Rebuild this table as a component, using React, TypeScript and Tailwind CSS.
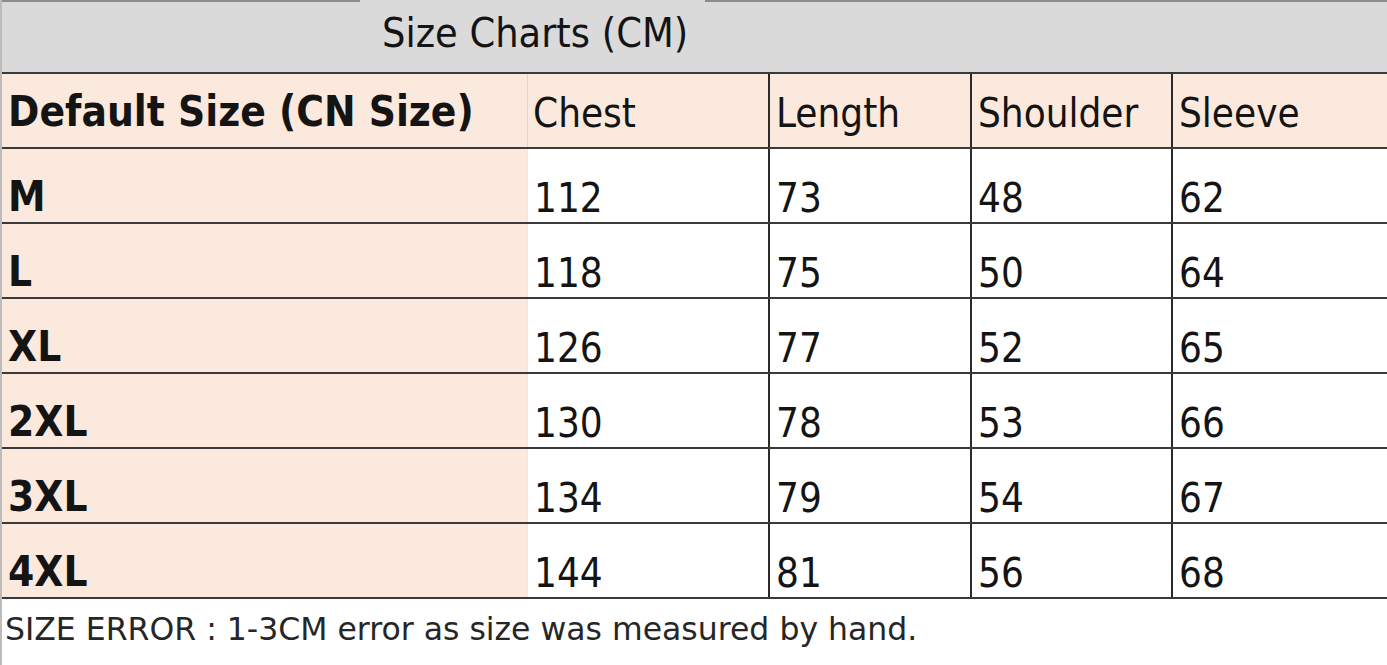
import React from "react";

const rows = [
  { size: "M", chest: "112", length: "73", shoulder: "48", sleeve: "62" },
  { size: "L", chest: "118", length: "75", shoulder: "50", sleeve: "64" },
  { size: "XL", chest: "126", length: "77", shoulder: "52", sleeve: "65" },
  { size: "2XL", chest: "130", length: "78", shoulder: "53", sleeve: "66" },
  { size: "3XL", chest: "134", length: "79", shoulder: "54", sleeve: "67" },
  { size: "4XL", chest: "144", length: "81", shoulder: "56", sleeve: "68" },
];

const font = { fontFamily: '"DejaVu Sans Condensed", "DejaVu Sans", sans-serif' };

const App = () => {
  return (
    <div
      className="w-[1387px] h-[665px] overflow-hidden bg-white border-l-2 border-[#bcbcbc] text-[#141414]"
      style={font}
    >
      {/* title band */}
      <div className="flex h-[74px] bg-[#dadada] border-b-2 border-[#3a3a3a]">
        <div className="w-[358px] border-t-2 border-[#8c8c8c]" />
        <div className="w-[345px] pl-[22px] pt-[13px] text-[41px] leading-[41px]">
          Size Charts (CM)
        </div>
        <div className="flex-1 border-t-2 border-[#8c8c8c]" />
      </div>

      {/* header row */}
      <div className="grid grid-cols-[525px_241px_202px_201px_1fr] h-[75px] bg-[#fce9dd] border-b-2 border-[#3a3a3a]">
        <div className="flex items-end pb-[14px] pl-[6px] text-[42px] leading-[42px] font-bold">
          Default Size (CN Size)
        </div>
        <div className="flex items-end pb-[14px] pl-[5px] text-[40px] leading-[40px] border-l border-[#ecd3c3]">
          Chest
        </div>
        <div className="flex items-end pb-[14px] pl-[6px] text-[40px] leading-[40px] border-l-2 border-[#2a2a2a]">
          Length
        </div>
        <div className="flex items-end pb-[14px] pl-[6px] text-[40px] leading-[40px] border-l-2 border-[#2a2a2a]">
          Shoulder
        </div>
        <div className="flex items-end pb-[14px] pl-[6px] text-[40px] leading-[40px] border-l-2 border-[#2a2a2a]">
          Sleeve
        </div>
      </div>

      {/* data rows */}
      {rows.map((r) => (
        <div
          key={r.size}
          className="grid grid-cols-[525px_241px_202px_201px_1fr] h-[75px] border-b-2 border-[#3a3a3a]"
        >
          <div className="flex items-end pb-[4px] pl-[6px] bg-[#fce9dd] text-[42px] leading-[42px] font-bold">
            {r.size}
          </div>
          <div className="flex items-end pb-[4px] pl-[6px] text-[40px] leading-[40px] border-l border-[#f3e6de]">
            {r.chest}
          </div>
          <div className="flex items-end pb-[4px] pl-[6px] text-[40px] leading-[40px] border-l-2 border-[#2a2a2a]">
            {r.length}
          </div>
          <div className="flex items-end pb-[4px] pl-[6px] text-[40px] leading-[40px] border-l-2 border-[#2a2a2a]">
            {r.shoulder}
          </div>
          <div className="flex items-end pb-[4px] pl-[6px] text-[40px] leading-[40px] border-l-2 border-[#2a2a2a]">
            {r.sleeve}
          </div>
        </div>
      ))}

      {/* note */}
      <div
        className="pl-[3px] pt-[14px] text-[31.5px] leading-[32px] text-[#262626]"
        style={{ fontFamily: '"DejaVu Sans", sans-serif' }}
      >
        SIZE ERROR : 1-3CM error as size was measured by hand.
      </div>
    </div>
  );
};

export default App;
